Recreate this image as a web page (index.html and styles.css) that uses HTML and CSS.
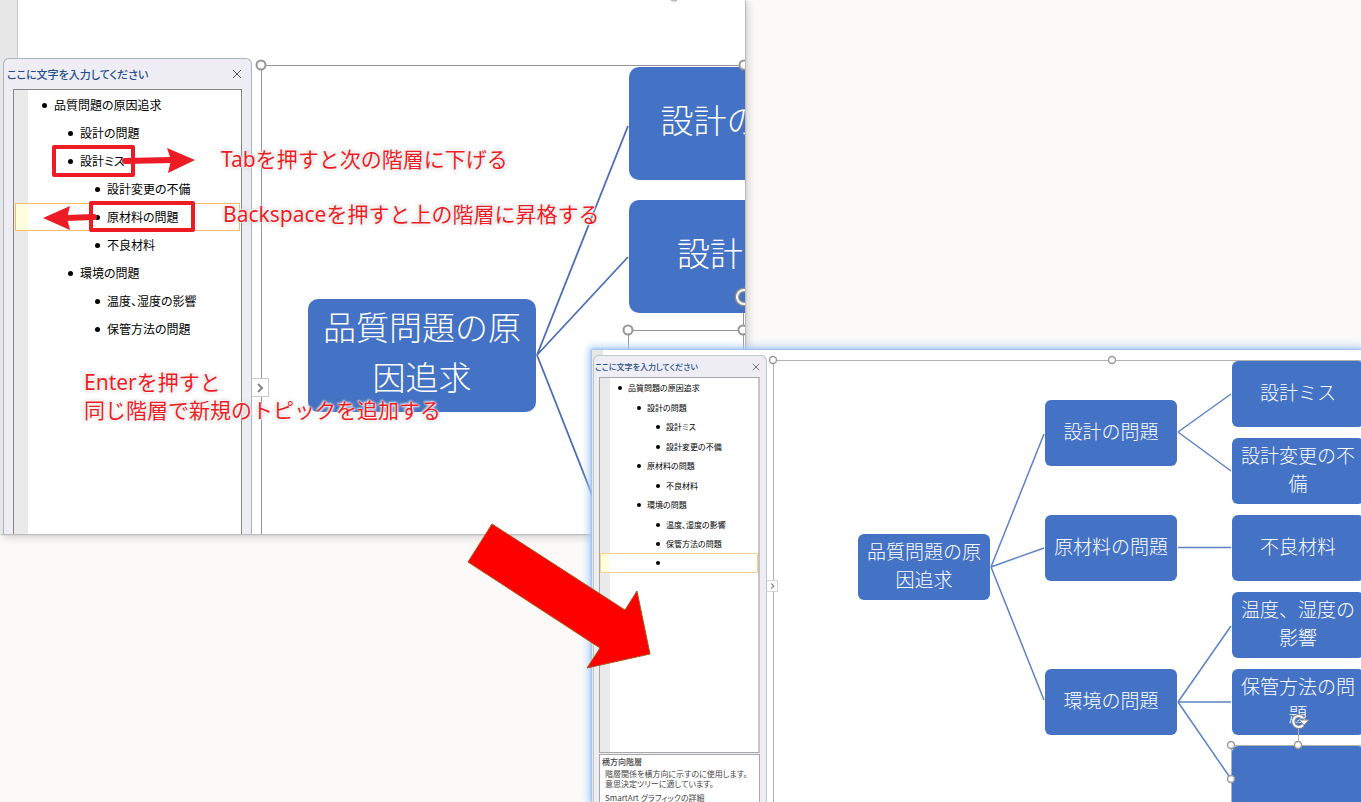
FILE: index.html
```html
<!DOCTYPE html>
<html lang="ja">
<head>
<meta charset="utf-8">
<title>SmartArt 横方向階層</title>
<link rel="stylesheet" href="styles.css">
</head>
<body>
<main class="desktop">
  <section class="window window-before">
    <div class="ruler"></div>
    <div class="diagram">
      <svg class="lines" aria-hidden="true">
        <g class="frame">
          <path d="M261.500 534V65.500H745"/>
          <path d="M628.500 360V330.500H745M743.500 298V360"/>
          <circle cx="674" cy="-4" r="5"/>
        </g>
        <path class="link link-large" d="M537 355L628 126M537 355L628 257M537 355L600 515"/>
      </svg>
      <div class="node large b-root">品質問題の原因追求</div>
      <div class="node large b-design">設計の問題</div>
      <div class="node large b-miss">設計ミス</div>
      <svg class="lines" aria-hidden="true">
        <g class="handle">
          <circle cx="261" cy="65" r="4.500"/><circle cx="744" cy="65" r="4.500"/>
          <circle cx="628" cy="330" r="4.500"/><circle cx="743" cy="330" r="4.500"/>
        </g>
        <circle cx="744" cy="297" r="7" fill="none" stroke="#8b8b8b" stroke-width="5"/>
        <circle cx="744" cy="297" r="7" fill="none" stroke="#fff" stroke-width="2"/>
      </svg>
    </div>
    <aside class="pane">
      <header class="pane-head">
        <h2>ここに文字を入力してください</h2>
        <button class="close" type="button" aria-label="閉じる"><svg viewBox="0 0 10 10"><path d="M1 1L9 9M9 1L1 9"/></svg></button>
      </header>
      <ul class="outline">
        <li class="l1">品質問題の原因追求</li>
        <li class="l2">設計の問題</li>
        <li class="l2">設計ミス</li>
        <li class="l3">設計変更の不備</li>
        <li class="l3 current">原材料の問題</li>
        <li class="l3">不良材料</li>
        <li class="l2">環境の問題</li>
        <li class="l3">温度、湿度の影響</li>
        <li class="l3">保管方法の問題</li>
      </ul>
    </aside>
    <button class="toggle" type="button" aria-label="テキスト ウィンドウ"><svg viewBox="0 0 8 12"><path d="M2 2L6 6L2 10"/></svg></button>
  </section>

  <svg class="lines" aria-hidden="true">
    <g fill="none" stroke="#ed1c24" stroke-width="4" stroke-linejoin="round">
      <rect x="54" y="147" width="79" height="28"/>
      <rect x="91" y="203" width="102" height="27"/>
    </g>
    <g stroke="#ed1c24" stroke-width="6" stroke-linecap="round" fill="#ed1c24">
      <path d="M125 161L172 160M94 217L66 218"/>
      <path stroke="none" d="M167 148L195 160L168 173L171 160ZM70 206L43 218L70 230L67 218Z"/>
    </g>
  </svg>
  <p class="note note-tab">Tabを押すと次の階層に下げる</p>
  <p class="note note-back">Backspaceを押すと上の階層に昇格する</p>
  <p class="note note-enter">Enterを押すと<br>同じ階層で新規のトピックを追加する</p>

  <section class="window window-after">
    <div class="ruler"></div>
    <div class="diagram">
      <svg class="lines" aria-hidden="true">
        <path class="frame" d="M181.500 460V10.500H3000"/>
        <path class="link" d="M399 217L452 84M399 217L452 198M399 217L452 350M586 82L639 44M586 82L639 121M586 197.500H639M586 352L639 276M586 352H639M586 352L639 429"/>
      </svg>
      <div class="node a-root">品質問題の原因追求</div>
      <div class="node a-design">設計の問題</div>
      <div class="node a-material">原材料の問題</div>
      <div class="node a-environment">環境の問題</div>
      <div class="node leaf a-miss">設計ミス</div>
      <div class="node leaf a-change">設計変更の不備</div>
      <div class="node leaf a-bad">不良材料</div>
      <div class="node leaf a-humid">温度、湿度の影響</div>
      <div class="node leaf a-storage">保管方法の問題</div>
      <div class="node leaf a-new"></div>
      <svg class="lines" aria-hidden="true">
        <path class="frame" d="M181.500 10V460M639.500 460V395.500H3000M706.500 376V395"/>
        <g class="handle small">
          <circle cx="181" cy="10" r="3.500"/><circle cx="520" cy="10" r="3.500"/>
          <circle cx="639" cy="395" r="3.500"/><circle cx="706" cy="395" r="3.500"/><circle cx="639" cy="429" r="3.500"/>
        </g>
        <g fill="none">
          <path d="M711 375A5.500 5.500 0 1 1 711 368" stroke="#8b8b8b" stroke-width="4"/>
          <path d="M707 370H717L712 375Z" fill="#fff" stroke="#8b8b8b"/>
          <path d="M711 375A5.500 5.500 0 1 1 711 368" stroke="#fff" stroke-width="2"/>
        </g>
      </svg>
    </div>
    <aside class="pane">
      <header class="pane-head">
        <h2>ここに文字を入力してください</h2>
        <button class="close" type="button" aria-label="閉じる"><svg viewBox="0 0 10 10"><path d="M1 1L9 9M9 1L1 9"/></svg></button>
      </header>
      <ul class="outline">
        <li class="l1">品質問題の原因追求</li>
        <li class="l2">設計の問題</li>
        <li class="l3">設計ミス</li>
        <li class="l3">設計変更の不備</li>
        <li class="l2">原材料の問題</li>
        <li class="l3">不良材料</li>
        <li class="l2">環境の問題</li>
        <li class="l3">温度、湿度の影響</li>
        <li class="l3">保管方法の問題</li>
        <li class="l3 current"></li>
      </ul>
      <div class="about">
        <h3>横方向階層</h3>
        <p>階層関係を横方向に示すのに使用します。<br>意思決定ツリーに適しています。</p>
        <a href="#details">SmartArt グラフィックの詳細</a>
      </div>
    </aside>
    <button class="toggle" type="button" aria-label="テキスト ウィンドウ"><svg viewBox="0 0 8 12"><path d="M2 2L6 6L2 10"/></svg></button>
  </section>

  <svg class="lines" aria-hidden="true">
    <path d="M492 524L625 610L637 591L650 654L587 668L600 648L468 562Z" fill="#f00" stroke="#a5591d"/>
  </svg>
</main>
</body>
</html>
```

FILE: styles.css
```css
* { box-sizing: border-box; }
body { margin: 0; font-family: "Noto Sans CJK JP", sans-serif; }
h2, h3, p, ul { margin: 0; padding: 0; }
button { padding: 0; border: 0; background: none; }

.desktop { position: relative; height: 100vh; overflow: hidden; background: #fbfaf9; }
.lines { position: absolute; top: 0; left: 0; width: 100%; height: 100%; pointer-events: none; }
.window { position: absolute; background: #fff; }
.window-before { left: 0; top: 0; width: 745px; height: 534px; box-shadow: 1px 1px 1px #bcbcbc, 3px 3px 8px #d0cece; }
.window-after { left: 592px; top: 350px; right: 0; bottom: 0; box-shadow: 0 0 2px 1px #93bff2, 0 0 8px 3px #a9cbf5; }
.diagram { position: absolute; top: 0; right: 0; bottom: 0; left: 0; overflow: hidden; }

.ruler { position: absolute; left: 0; top: 0; bottom: 0; width: 18px; background: #e7e7e7; border-right: 1px solid #c9c9c9; }
.window-after .ruler { width: 11px; border: 0; }

.pane { position: absolute; left: 3px; top: 58px; bottom: 0; width: 249px; padding: 0 9px; display: flex; flex-direction: column; background: #ededf3; border: 1px solid #a7b8bb; border-bottom: 0; border-radius: 6px 6px 0 0; }
.pane-head { display: flex; align-items: center; justify-content: space-between; height: 30px; margin-left: -6px; flex: none; }
.pane-head h2 { color: #1e4e8c; font-size: 11px; line-height: 20px; font-weight: 500; font-feature-settings: "palt"; white-space: nowrap; }
.close { display: flex; width: 10px; height: 10px; }
.close svg { width: 100%; height: 100%; fill: none; stroke: #555; stroke-width: 1; }

.outline { flex: 1; display: grid; align-content: start; grid-auto-rows: 28px; padding: 1px; list-style: none; color: #000; font-size: 12px; line-height: 18px; font-feature-settings: "palt"; border: 1px solid #858585; border-bottom: 0; background: linear-gradient(90deg, #eaeaea 14px, #fff 14px); }
.outline li { display: flex; align-items: center; white-space: nowrap; border: 1px solid transparent; }
.outline li::before { content: ""; flex: none; width: 5px; height: 5px; margin-right: 7px; border-radius: 50%; background: #000; }
.outline .l1 { padding-left: 26px; }
.outline .l2 { padding-left: 52px; }
.outline .l3 { padding-left: 79px; }
.outline .current { border-color: #fdbb63; background: linear-gradient(90deg, #fffddc 12px, #fff 12px); }

.toggle { position: absolute; left: 252px; top: 378px; width: 17px; height: 19px; display: flex; align-items: center; justify-content: center; background: #fff; border: 1px solid #c8c8c8; border-left: 0; }
.toggle svg { width: 8px; height: 12px; fill: none; stroke: #858585; stroke-width: 2; }

.window-after .pane { left: 1px; top: 5px; width: 174px; padding: 0 6px 0 5px; border-color: #b9c9c9; }
.window-after .pane-head { height: 21px; margin-left: -4px; }
.window-after .pane-head h2 { font-size: 8px; line-height: 14px; }
.window-after .close { width: 8px; height: 8px; }
.window-after .outline { flex: none; height: 376px; grid-template-rows: 20px 19px 20px 19px 20px 19px 20px 19px 19px 20px; padding: 0; font-size: 8px; line-height: 12px; border: 1px solid #a8a8a8; border-right: 2px solid #c3c3c8; background: linear-gradient(90deg, #eaeaea 10px, #fff 10px); }
.window-after .outline li::before { width: 4px; height: 4px; margin-right: 6px; }
.window-after .outline .l1 { padding-left: 17px; }
.window-after .outline .l2 { padding-left: 36px; }
.window-after .outline .l3 { padding-left: 55px; }
.window-after .outline .current { border-color: #fbd18e; background: linear-gradient(90deg, #fffddc 8px, #fff 8px); }
.about { flex: 1; min-height: 0; margin-top: 1px; padding: 1px 2px; border: 1px solid #a8a8a8; border-bottom: 0; background: #fff; color: #444; font-size: 8px; line-height: 10px; font-feature-settings: "palt"; white-space: nowrap; overflow: hidden; }
.about h3 { font-size: 8px; line-height: 12px; font-weight: 500; }
.about p { margin: 1px 0 0 3px; }
.about a { display: block; margin: 4px 0 0 3px; color: #444; text-decoration: none; }
.window-after .toggle { left: 175px; top: 230px; width: 11px; height: 12px; border-color: #d4d4d4; }
.window-after .toggle svg { width: 5px; height: 8px; stroke: #888; }

.node { position: absolute; display: flex; align-items: center; justify-content: center; width: 132px; height: 66px; padding: 0 8px 4px; border-radius: 6px; background: #4472c4; color: #fff; font-size: 19px; line-height: 28px; font-weight: 300; text-align: center; }
.large { width: 228px; height: 113px; padding: 0 14px 10px; border-radius: 10px; font-size: 33px; line-height: 50px; }
.b-root { left: 308px; top: 299px; }
.b-design { left: 629px; top: 67px; }
.b-miss { left: 629px; top: 200px; }
.a-root { left: 266px; top: 184px; }
.a-design { left: 453px; top: 50px; }
.a-material { left: 453px; top: 165px; }
.a-environment { left: 453px; top: 319px; }
.leaf { left: 640px; }
.a-miss { top: 11px; }
.a-change { top: 88px; }
.a-bad { top: 165px; }
.a-humid { top: 242px; }
.a-storage { top: 319px; }
.a-new { top: 396px; }

.frame { fill: none; stroke: #969696; stroke-width: 1; }
.window-after .frame { stroke: #b2b2b2; }
.link { fill: none; stroke: #5b82c4; stroke-width: 1.5; }
.link-large { stroke: #4a6fb4; stroke-width: 1.8; }
.handle { fill: #fff; stroke: #969696; stroke-width: 2; }
.small { stroke: #999; stroke-width: 1.4; }

.note { position: absolute; color: #ed1c24; font-family: "Noto Sans", "Noto Sans CJK JP", sans-serif; font-size: 21px; line-height: 28px; white-space: nowrap; text-shadow: 0 0 1px #fff, 1px 1px 2px #fff, -1px -1px 2px #fff, 0 0 4px #999; }
.note-tab { left: 221px; top: 145px; }
.note-back { left: 223px; top: 200px; }
.note-enter { left: 84px; top: 368px; }
```
